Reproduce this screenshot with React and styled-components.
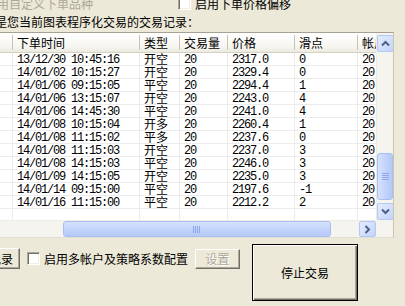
import React from 'react';
import styled, { createGlobalStyle } from 'styled-components';

const GlobalStyle = createGlobalStyle`
    html, body {
        margin: 0;
        padding: 0;
        background: #ECE9D8;
        overflow: hidden;
    }
`;

const Window = styled.div`
    width: 405px;
    height: 306px;
    overflow: hidden;
    display: flex;
    flex-direction: column;
    background: #ECE9D8;
    font-family: "Noto Sans CJK SC", "Noto Sans", sans-serif;
    font-size: 12px;
    color: #000;
`;

const TopRow = styled.div`
    display: flex;
    align-items: center;
    height: 13px;
    line-height: 13px;
    margin-top: -3px;
    white-space: nowrap;
`;

const DisabledText = styled.span`
    color: #ACA899;
    margin-left: -15px;
    width: 193px;
    flex: none;
`;

const CheckBox = styled.span`
    box-sizing: border-box;
    width: 13px;
    height: 13px;
    flex: none;
    background: #fff;
    border-style: solid;
    border-width: 1px;
    border-color: #ACA899 #fff #fff #ACA899;
    box-shadow: inset 1px 1px 0 #716F64, inset -1px -1px 0 #F1EFE2;
    margin-top: ${p => p.$offset || 0}px;
    margin-left: ${p => p.$ml || 0}px;
`;

const Label = styled.span`
    margin-left: ${p => p.$gap || 4}px;
    white-space: nowrap;
    flex: none;
`;

const Caption = styled.div`
    margin-top: 5px;
    margin-left: -29px;
    height: 13px;
    line-height: 13px;
    white-space: nowrap;
`;

const ListBox = styled.div`
    box-sizing: border-box;
    margin-top: 4px;
    margin-left: -20px;
    width: 414px;
    height: 206px;
    flex: none;
    border: 1px solid #A5A294;
    border-right-color: #C9C6B8;
    border-bottom-color: #E2DFD2;
    background: #fff;
    display: grid;
    grid-template-columns: 1fr 17px;
    grid-template-rows: 1fr 17px;
    overflow: hidden;
`;

const TableArea = styled.div`
    display: flex;
    flex-direction: column;
    overflow: hidden;
    min-width: 0;
`;

const COLS = '32px 127px 40px 48px 67px 63px 60px';

const HeaderRow = styled.div`
    display: grid;
    grid-template-columns: ${COLS};
    height: 20px;
    flex: none;
    background: linear-gradient(#FFFFFF, #F7F6F1 70%, #ECEADF);
    border-bottom: 1px solid #D5D2C3;
    box-sizing: border-box;
`;

const HeaderCell = styled.div`
    position: relative;
    padding-left: 4px;
    line-height: 19px;
    white-space: nowrap;
    &::after {
        content: '';
        position: absolute;
        right: 0;
        top: 2px;
        bottom: 2px;
        width: 1px;
        background: #C7C4B4;
    }
`;

const Row = styled.div`
    display: grid;
    grid-template-columns: ${COLS};
    height: 13px;
    flex: none;
    box-sizing: border-box;
    border-bottom: 1px solid #ECECEC;
`;

const Cell = styled.div`
    padding-left: 4px;
    padding-top: ${p => (p.$mono ? 1 : 0)}px;
    border-right: 1px solid #ECECEC;
    line-height: 12px;
    white-space: nowrap;
    font-family: ${p => p.$mono
        ? '"Liberation Mono", "DejaVu Sans Mono", monospace'
        : '"Noto Sans CJK SC", sans-serif'};
    letter-spacing: ${p => (p.$mono ? '-1.2px' : '0')};
`;

const VScroll = styled.div`
    display: flex;
    flex-direction: column;
    padding-top: 2px;
    background: #F5F4EE;
    border-left: 1px solid #EEEDE5;
`;

const ScrollTrack = styled.div`
    flex: 1;
    position: relative;
`;

const HScroll = styled.div`
    display: flex;
    background: #F5F4EE;
    border-top: 1px solid #EEEDE5;
    min-width: 0;
`;

const Corner = styled.div`
    background: #F5F4EE;
`;

const ScrollButton = styled.div`
    box-sizing: border-box;
    width: ${p => p.$w || 17}px;
    height: ${p => p.$h || 17}px;
    flex: none;
    border: 1px solid #B4C8F6;
    border-radius: 2px;
    background: linear-gradient(135deg, #E4ECFE, #C2D3FC);
    display: flex;
    align-items: center;
    justify-content: center;
`;

const Thumb = styled.div`
    position: absolute;
    box-sizing: border-box;
    border: 1px solid #A9BFF2;
    border-radius: 3px;
    background: linear-gradient(${p => (p.$horizontal ? '180deg' : '90deg')}, #D6E2FD, #C0D1FA 60%, #B5C8F7);
    display: flex;
    align-items: center;
    justify-content: center;
`;

const BottomRow = styled.div`
    display: flex;
    align-items: flex-start;
    margin-top: 6px;
`;

const LeftGroup = styled.div`
    display: flex;
    align-items: center;
    margin-top: 4px;
    height: 21px;
`;

const PushButton = styled.div`
    box-sizing: border-box;
    width: ${p => p.$w}px;
    height: ${p => p.$h}px;
    flex: none;
    margin-left: ${p => p.$ml || 0}px;
    display: flex;
    align-items: center;
    justify-content: center;
    white-space: nowrap;
    background: #ECE9D8;
    color: ${p => (p.$disabled ? '#ACA899' : '#000')};
    text-shadow: ${p => (p.$disabled ? '1px 1px 0 #fff' : 'none')};
    border: 1px solid;
    border-color: ${p => (p.$default ? '#000' : '#fff #716F64 #716F64 #fff')};
    box-shadow: ${p => p.$default
        ? 'inset 1px 1px 0 #fff, inset -1px -1px 0 #716F64, inset -2px -2px 0 #ACA899'
        : 'inset -1px -1px 0 #ACA899'};
`;

const Arrow = ({ dir }) => {
    const rot = { up: 0, right: 90, down: 180, left: 270 }[dir];
    return (
        <svg width="9" height="9" viewBox="0 0 9 9" style={{ transform: `rotate(${rot}deg)` }}>
            <polyline points="1,6.5 4.5,3 8,6.5" fill="none" stroke="#4D6185" strokeWidth="2" />
        </svg>
    );
};

const Grip = ({ horizontal }) => (
    <svg width={horizontal ? 8 : 7} height={horizontal ? 7 : 8} viewBox={horizontal ? '0 0 8 7' : '0 0 7 8'}>
        {[0, 2, 4, 6].map(i => horizontal
            ? <line key={i} x1={i + 0.5} y1="0" x2={i + 0.5} y2="7" stroke="#8DA9EB" strokeWidth="1" />
            : <line key={i} x1="0" y1={i + 0.5} x2="7" y2={i + 0.5} stroke="#8DA9EB" strokeWidth="1" />)}
    </svg>
);

const columns = ['', '下单时间', '类型', '交易量', '价格', '滑点', '帐户'];

const trades = [
    ['13/12/30 10:45:16', '开空', '20', '2317.0', '0'],
    ['14/01/02 10:15:27', '开空', '20', '2329.4', '0'],
    ['14/01/06 09:15:05', '平空', '20', '2294.4', '1'],
    ['14/01/06 13:15:07', '开空', '20', '2243.0', '4'],
    ['14/01/06 14:45:30', '平空', '20', '2241.0', '4'],
    ['14/01/08 10:15:04', '开多', '20', '2260.4', '1'],
    ['14/01/08 11:15:02', '平多', '20', '2237.6', '0'],
    ['14/01/08 11:15:03', '开空', '20', '2237.0', '3'],
    ['14/01/08 14:15:03', '平空', '20', '2246.0', '3'],
    ['14/01/09 14:15:05', '开空', '20', '2235.0', '3'],
    ['14/01/14 09:15:00', '平空', '20', '2197.6', '-1'],
    ['14/01/16 11:15:00', '平空', '20', '2212.2', '2'],
];

const App = () => {
    return (
        <Window>
            <GlobalStyle />
            <TopRow>
                <DisabledText>启用自定义下单品种</DisabledText>
                <CheckBox $offset={-1} />
                <Label $gap={4}>启用下单价格偏移</Label>
            </TopRow>
            <Caption>以下是您当前图表程序化交易的交易记录：</Caption>
            <ListBox>
                <TableArea>
                    <HeaderRow>
                        {columns.map((c, i) => <HeaderCell key={i}>{c}</HeaderCell>)}
                    </HeaderRow>
                    {trades.map((t, i) => (
                        <Row key={i}>
                            <Cell $mono>{i + 1}</Cell>
                            <Cell $mono>{t[0]}</Cell>
                            <Cell>{t[1]}</Cell>
                            <Cell $mono>{t[2]}</Cell>
                            <Cell $mono>{t[3]}</Cell>
                            <Cell $mono>{t[4]}</Cell>
                            <Cell $mono>20</Cell>
                        </Row>
                    ))}
                    <Row>
                        {columns.map((c, i) => <Cell key={i} />)}
                    </Row>
                </TableArea>
                <VScroll>
                    <ScrollButton><Arrow dir="up" /></ScrollButton>
                    <ScrollTrack>
                        <Thumb style={{ left: 0, right: 0, top: 101, height: 47 }}>
                            <Grip />
                        </Thumb>
                    </ScrollTrack>
                    <ScrollButton><Arrow dir="down" /></ScrollButton>
                </VScroll>
                <HScroll>
                    <ScrollButton $h={16}><Arrow dir="left" /></ScrollButton>
                    <ScrollTrack>
                        <Thumb $horizontal style={{ top: 0, bottom: 0, left: 65, width: 268 }}>
                            <Grip horizontal />
                        </Thumb>
                    </ScrollTrack>
                    <ScrollButton $h={16}><Arrow dir="right" /></ScrollButton>
                </HScroll>
                <Corner />
            </ListBox>
            <BottomRow>
                <LeftGroup>
                    <PushButton $w={62} $h={21} $ml={-42}>查看记录</PushButton>
                    <CheckBox $ml={7} />
                    <Label $gap={4}>启用多帐户及策略系数配置</Label>
                    <PushButton $w={45} $h={20} $ml={7} $disabled>设置</PushButton>
                </LeftGroup>
                <PushButton $w={106} $h={57} $ml={12} $default>停止交易</PushButton>
            </BottomRow>
        </Window>
    );
};

export default App;
